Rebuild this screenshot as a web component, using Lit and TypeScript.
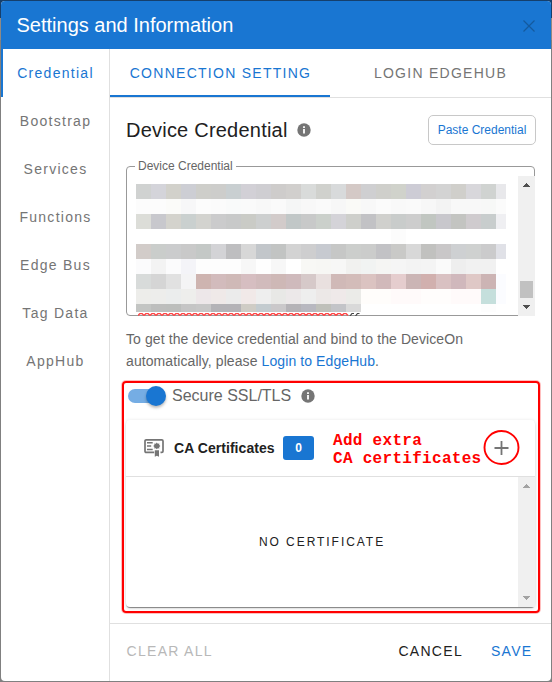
import { LitElement, html, css } from "lit";
import { customElement, property } from "lit/decorators.js";

const NAV = ["Credential", "Bootstrap", "Services", "Functions", "Edge Bus", "Tag Data", "AppHub"];

// Redacted credential text: one row per 15px band, one colour per block.
const MOSAIC: string[] = [
  "d0d2d1 d4d4da d2d1cb cdced4 cececa cdcdcb c9cfd1 d2d0d6 cfced2 cecccb d1cfcd d9dbda d0d1cd d8dadb d4c9c6 cfcfd1 cfcfcb d0d2cb cdccd5 d2d0d0 d3d3d3 d0cfcb d8d7db d0d3d1 e8e8eb",
  "fcfcfc fcfcfc fbfbf9 f7f7f8 fcfcfc fbfbfb f9fafa fafafa f8f8f8 fafafa f5f6f6 f8f8f8 fafafa f7f7f7 fafaf7 f8f8f8 fbfbfb f9f9f9 fafafa f7f7f7 f3f3f3 f8f8f8 f8f8f8 f7f8f7 fbfbfb",
  "dcddd8 c8c8cd d4d3cd cad0cf d3d3cf cbcbcc c8c9c9 cacbc6 cdcfcf d2cbca c1c7c7 c8c9c9 cbd0cb d4d3d8 cecfcb c2c2c5 d0d0cd c9cccb cdcdcd c1c6c1 c8c7cc c3c4c1 cfcbce c8cdcd efeff2",
  "ffffff ffffff ffffff ffffff ffffff ffffff ffffff ffffff ffffff ffffff ffffff ffffff ffffff ffffff ffffff ffffff ffffff fcfcfc ffffff ffffff ffffff ffffff ffffff ffffff ffffff",
  "d2ccc9 cacdcb cbcccd c9c9c9 c4c8c6 d3d3d6 bebec0 d7d7d7 c2c6ca c2c4c3 d3d3d3 cececf c7cad0 c6c7c6 cccecc cbcccb c2c2c5 c9c9c7 d8d8d8 c1c1bf c9c7c8 ced0d2 cfd1d0 cbcbcc e0e1e7",
  "fbfbfc f3f3f3 fbfbfc f4f4f8 fdfdfd fdfdfd fdfdfd f7f7f7 fefefe f7f7f7 ffffff f8f8f5 f7f7f4 f7f7f6 f1f1ef f1f3f2 f5f5f3 f5f5f5 f3f3f3 f4f4f4 fafafa eeeeee f1f1f1 f1f1f1 ffffff",
  "d8dbda d5d5d5 e1e1e1 f4f4f5 ceb4b0 d2bbbc cfb9b7 d6bec1 d1bbbc ceb8b6 cfbabc d6c9c9 e9e0df d0b9b7 d3bcb9 dbc3c1 d1b9ba e5cdce cbb5b5 d1b0ae d9c1c2 d0b8bc dfc8c6 ccb4b4 fbfcff",
  "ededea ededeb ebeded eeeeec ede7e9 efe9e8 ebebeb f1e9e8 eeeeee e8e8e6 ece8e9 eeeeee ece8e7 efe9e9 ebebe8 fffdfb fffdfb fffafa fffafa fffdfc fffdfc fffafa fffafa c5dfdc fbfcff",
  "c3c5c3 bdbebd bcbebc c5c5c5 c7c7c7 b4b3b7 b4b3b7 cfccc5 c3cbcf cac8ca b5b3b7 b8b8c0 bfc0ba c3c4c8 d9d9d9 ffffff ffffff ffffff ffffff ffffff ffffff ffffff ffffff fdfdfd ffffff",
];

@customElement("info-icon")
class InfoIcon extends LitElement {
  static styles = css`
    :host { display: block; width: 14px; height: 14px; }
    svg { display: block; }
  `;
  render() {
    return html`<svg width="14" height="14" viewBox="0 0 14 14">
      <circle cx="7" cy="7" r="6.7" fill="#757575" />
      <path d="M6.100 3.300h1.800v1.600H6.100zM6.100 6.100h1.800v4.500H6.100z" fill="#fff" />
    </svg>`;
  }
}

@customElement("scroll-track")
class ScrollTrack extends LitElement {
  @property({ type: Boolean, reflect: true }) active = false;
  static styles = css`
    :host { display: flex; flex-direction: column; justify-content: space-between; align-items: center;
      width: 17px; background: #f0f0f0; color: #a3a3a3; box-sizing: border-box; padding: 7px 0 7px; }
    :host([active]) { color: #505050; }
    svg { display: block; }
    .down { display: flex; flex-direction: column; align-items: center; gap: 7px; }
    .thumb { width: 13px; height: 17px; background: #c1c1c1; }
  `;
  render() {
    return html`
      <svg width="7" height="4" viewBox="0 0 7 4"><path d="M3 0h1v1h1v1h1v1h1v1H0V3h1V2h1V1h1z" fill="currentColor" /></svg>
      <div class="down">
        ${this.active ? html`<div class="thumb"></div>` : ""}
        <svg width="7" height="4" viewBox="0 0 7 4"><path d="M0 0h7v1H6v1H5v1H4v1H3V3H2V2H1V1H0z" fill="currentColor" /></svg>
      </div>`;
  }
}

@customElement("credential-field")
class CredentialField extends LitElement {
  static styles = css`
    :host { display: block; position: relative; height: 150px; margin-right: 1px; }
    .outline { position: absolute; inset: 0; border: 1px solid #999; border-radius: 4px; }
    .label { position: absolute; left: 9px; top: -7px; padding: 0 3px; background: #fff;
      font-size: 12px; line-height: 14px; color: #666; white-space: nowrap; }
    .body { position: relative; display: flex; justify-content: space-between; align-items: flex-start; padding-top: 10px; height: 140px; }
    .text { padding: 8px 0 0 10px; }
    .row { display: grid; grid-template-columns: repeat(25, 15px); width: 370px; height: 15px; overflow: hidden; }
    .row:last-of-type { height: 8px; }
    .tail { display: block; margin: 1px 0 0 2px; }
    scroll-track { height: 140px; }
  `;
  render() {
    const wave = Array.from({ length: 35 }, (_, i) => `M${i * 6} 2.500l2-2h2l2 2`).join("");
    return html`
      <div class="outline"></div>
      <div class="label">Device Credential</div>
      <div class="body">
        <div class="text">
          ${MOSAIC.map((row) => html`<div class="row">${row.split(" ").map((c) =>
            html`<span style="background:#${c}"></span>`)}</div>`)}
          <svg class="tail" width="226" height="3" viewBox="0 0 226 3">
            <path d=${wave} fill="none" stroke="#f44" stroke-width="1.400" />
            <path d="M212 3l2-2.500h2M217.500 3l2-2.500h2" fill="none" stroke="#444" stroke-width="1.200" />
          </svg>
        </div>
        <scroll-track active></scroll-track>
      </div>`;
  }
}

@customElement("certificate-card")
class CertificateCard extends LitElement {
  static styles = css`
    :host { display: flex; flex-direction: column; height: 187px; margin-right: 1px; border-radius: 4px; background: #fff;
      box-shadow: 0 2px 1px -1px rgba(0,0,0,.3), 0 1px 1px rgba(0,0,0,.2), 0 1px 4px rgba(0,0,0,.14); }
    .head { display: flex; align-items: center; height: 57px; box-sizing: border-box; border-bottom: 1px solid #e0e0e0; padding-left: 18px; }
    .cert { display: block; margin-right: 10px; }
    .title { font-weight: 700; font-size: 14px; letter-spacing: 0.05px; color: #212121; width: 109px; white-space: nowrap; }
    .count { width: 31px; height: 24px; border-radius: 3px; background: #1976d2; color: #fff; font-weight: 700;
      font-size: 12px; line-height: 24px; text-align: center; }
    .note { margin-left: 19px; width: 149.500px; font: 700 16px/18px "Liberation Mono", "Courier New", monospace;
      letter-spacing: 0.3px; color: #f00; white-space: pre; padding-top: 3px; }
    .add { display: block; margin-bottom: 1px; }
    .list { flex: 1; display: flex; min-height: 0; }
    .empty { flex: 1; display: flex; align-items: center; justify-content: center; font-size: 12px; letter-spacing: 1.950px; color: #212121; }
  `;
  render() {
    return html`
      <div class="head">
        <svg class="cert" width="20" height="20" viewBox="0 0 20 20">
          <path d="M10.200 14.400H2.200Q1 14.400 1 13.200V3Q1 1.900 2.200 1.900H17.800Q19 1.900 19 3V13.200Q19 14.400 17.800 14.400H16.500" fill="none" stroke="#757575" stroke-width="1.700" />
          <path d="M3 4.800h5.700M3 8h4.200M3 11.500h5.700" stroke="#757575" stroke-width="1.400" />
          <path d="M12.800 4.600l1 1.100 1.500-.2-.1 1.500 1.200.9-1.200 1 .1 1.500-1.500-.2-1 1.100-1-1.100-1.500.2.1-1.500-1.200-1 1.200-.9-.1-1.500 1.500.2z" fill="#757575" />
          <path d="M10.800 12.300h4.200v6.500l-2.100-1.100-2.100 1.100z" fill="#757575" />
        </svg>
        <div class="title">CA Certificates</div>
        <div class="count">0</div>
        <div class="note">Add extra
CA certificates</div>
        <svg class="add" width="37" height="37" viewBox="0 0 37 37">
          <ellipse cx="18.500" cy="18.500" rx="17" ry="16.500" fill="none" stroke="#f00" stroke-width="1.900" />
          <path d="M11.500 19h14M18.500 12v14" stroke="#757575" stroke-width="1.800" />
        </svg>
      </div>
      <div class="list">
        <div class="empty">NO CERTIFICATE</div>
        <scroll-track></scroll-track>
      </div>`;
  }
}

@customElement("app-root")
class AppRoot extends LitElement {
  static styles = css`
    :host { display: block; box-sizing: border-box; width: 552px; height: 682px; padding: 1px; overflow: hidden;
      background: linear-gradient(#153f6c 0 18px, #908a84 18px 40px, #808080 40px);
      font-family: "Liberation Sans", Arial, sans-serif; font-size: 14px; color: #212121; }
    .dialog { display: flex; flex-direction: column; height: 680px; border-radius: 4px; background: #fff; overflow: hidden; }
    .header { display: flex; align-items: center; justify-content: space-between; height: 48px; padding: 0 15px 0 15.500px;
      background: #1976d2; color: #fff; font-size: 20px; }
    .header svg { display: block; margin-top: 1px; }
    .content { flex: 1; display: flex; min-height: 0; }
    .side { width: 108px; border-right: 1px solid #e0e0e0; letter-spacing: 1.280px; color: #757575; }
    .nav { height: 48px; line-height: 48px; box-sizing: border-box; text-align: center; border-left: 2px solid transparent; padding-right: 1px; white-space: nowrap; }
    .nav.on { color: #1976d2; border-left-color: #1976d2; }
    .main { flex: 1; display: flex; flex-direction: column; min-width: 0; }
    .tabs { display: flex; height: 49px; box-sizing: border-box; border-bottom: 1px solid #e0e0e0; letter-spacing: 1.270px; color: #757575; }
    .tab { width: 220px; box-sizing: border-box; padding-left: 1px; line-height: 48px; text-align: center; height: 48px; white-space: nowrap; }
    .tab.on { color: #1976d2; border-bottom: 2px solid #1976d2; }
    .panel { flex: 1; min-height: 0; padding: 17px 15px 0 16px; }
    .title-row { display: flex; align-items: center; height: 30px; margin-bottom: 21px; }
    .title { font-size: 20px; letter-spacing: 0.220px; margin-right: 9px; }
    .paste { margin-left: auto; width: 108px; height: 30px; box-sizing: border-box; border: 1px solid #c8c8c8; border-radius: 5px;
      color: #1976d2; font-size: 12px; line-height: 28px; text-align: center; }
    .hint { margin-top: 12px; line-height: 22px; letter-spacing: 0.090px; color: #666; white-space: nowrap; }
    .link { color: #1976d2; }
    .secure { position: relative; margin-top: 13px; }
    .frame { position: absolute; left: -4px; top: -4px; width: 418px; height: 232px; box-sizing: border-box;
      border: 2px solid #f00; border-radius: 4px; box-shadow: 0 0 0 1px rgba(255,0,0,.25); }
    .switch-row { display: flex; align-items: center; height: 22px; padding: 0 0 13px 2px; font-size: 16px; color: #666; }
    .switch { position: relative; width: 34px; height: 14px; border-radius: 7px; background: #75ade4; margin: 0 10px 1px 0; }
    .knob { position: absolute; left: 18px; top: -3px; width: 20px; height: 20px; border-radius: 50%; background: #1976d2;
      box-shadow: 0 2px 3px rgba(0,0,0,.28); }
    .switch-row info-icon { margin-left: 10px; }
    .footer { display: flex; align-items: center; height: 58px; box-sizing: border-box; border-top: 1px solid #e0e0e0;
      padding: 0 18.500px 4px 16.500px; letter-spacing: 1.300px; }
    .clear { color: #b8b8b8; margin-right: auto; }
    .save { color: #1976d2; margin-left: 28px; }
  `;
  render() {
    return html`
      <div class="dialog">
        <div class="header">
          <span>Settings and Information</span>
          <svg width="14" height="14" viewBox="0 0 14 14"><path d="M1.500 1.500l11 11M12.500 1.500l-11 11" stroke="#145a9e" stroke-width="1.200" /></svg>
        </div>
        <div class="content">
          <div class="side">${NAV.map((n, i) => html`<div class="nav ${i === 0 ? "on" : ""}">${n}</div>`)}</div>
          <div class="main">
            <div class="tabs">
              <div class="tab on">CONNECTION SETTING</div>
              <div class="tab">LOGIN EDGEHUB</div>
            </div>
            <div class="panel">
              <div class="title-row">
                <div class="title">Device Credential</div>
                <info-icon></info-icon>
                <div class="paste">Paste Credential</div>
              </div>
              <credential-field></credential-field>
              <div class="hint">To get the device credential and bind to the DeviceOn<br />automatically, please <span class="link">Login to EdgeHub</span>.</div>
              <div class="secure">
                <div class="switch-row">
                  <div class="switch"><div class="knob"></div></div>
                  <span>Secure SSL/TLS</span>
                  <info-icon></info-icon>
                </div>
                <certificate-card></certificate-card>
                <div class="frame"></div>
              </div>
            </div>
            <div class="footer">
              <span class="clear">CLEAR ALL</span>
              <span>CANCEL</span>
              <span class="save">SAVE</span>
            </div>
          </div>
        </div>
      </div>`;
  }
}
